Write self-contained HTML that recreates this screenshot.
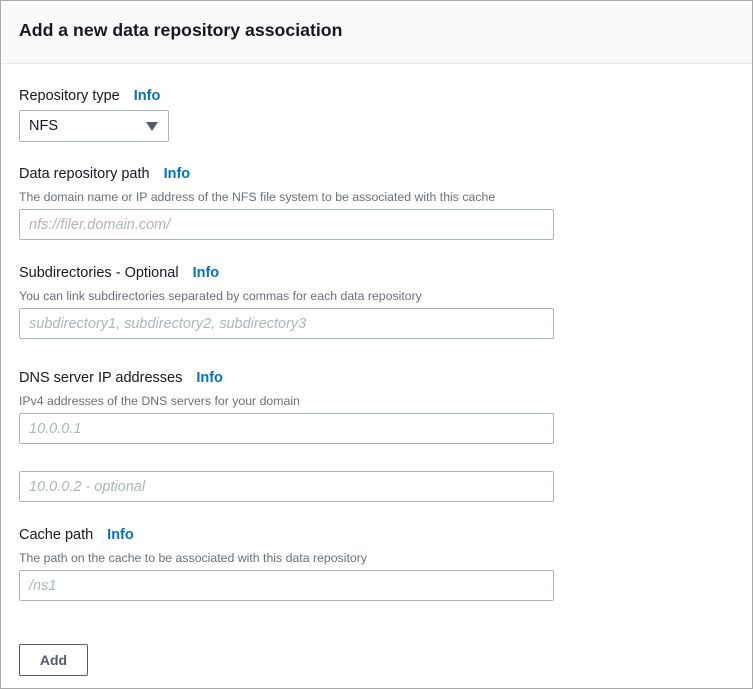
<!DOCTYPE html>
<html><head><style>
body{margin:0;width:753px;height:689px;background:#fff;font-family:"Liberation Sans",sans-serif;position:relative;overflow:hidden}
.box{position:absolute;left:0;top:0;width:751px;height:687px;border:1px solid #a9a9a9}
.hdr{position:absolute;left:1px;top:1px;width:751px;height:62px;background:#fafafa;border-bottom:1px solid #eaeded}
.t{position:absolute;white-space:nowrap}
h1{position:absolute;left:19px;top:20px;margin:0;font-size:17.7px;font-weight:bold;color:#16191f}
.lab{font-size:14.5px;color:#16191f;margin-top:1px}
.lab b{color:#0073bb;margin-left:14px}
.d{font-size:12.3px;color:#687078}
.in{position:absolute;left:19px;border:1px solid #aab7b8;border-radius:2px;font-size:14.5px;font-style:italic;color:#aab7b8;line-height:29px;padding:1px 0 0 9px;box-sizing:border-box;width:535px;height:31px}
</style></head><body>
<div class="box"></div>
<div class="hdr"></div>
<h1>Add a new data repository association</h1>
<div class="t lab" style="left:19px;top:87px">Repository type<b>Info</b></div>
<div style="position:absolute;left:19px;top:110px;width:150px;height:32px;border:1px solid #aab7b8;border-radius:2px;box-sizing:border-box"></div>
<div class="t" style="left:29px;top:118px;font-size:14.5px;color:#16191f">NFS</div>
<svg style="position:absolute;left:146px;top:122px" width="12" height="9"><path d="M0 0H12L6 9Z" fill="#545b64"/></svg>
<div class="t lab" style="left:19px;top:165px">Data repository path<b>Info</b></div>
<div class="t d" style="left:19px;top:190px">The domain name or IP address of the NFS file system to be associated with this cache</div>
<div class="in" style="top:209px">nfs://filer.domain.com/</div>
<div class="t lab" style="left:19px;top:264px">Subdirectories - Optional<b>Info</b></div>
<div class="t d" style="left:19px;top:289px">You can link subdirectories separated by commas for each data repository</div>
<div class="in" style="top:308px">subdirectory1, subdirectory2, subdirectory3</div>
<div class="t lab" style="left:19px;top:369px">DNS server IP addresses<b>Info</b></div>
<div class="t d" style="left:19px;top:394px">IPv4 addresses of the DNS servers for your domain</div>
<div class="in" style="top:413px">10.0.0.1</div>
<div class="in" style="top:471px">10.0.0.2 - optional</div>
<div class="t lab" style="left:19px;top:526px">Cache path<b>Info</b></div>
<div class="t d" style="left:19px;top:551px">The path on the cache to be associated with this data repository</div>
<div class="in" style="top:570px">/ns1</div>
<div style="position:absolute;left:19px;top:644px;width:69px;height:32px;border:1px solid #545b64;border-radius:2px;box-sizing:border-box;text-align:center;line-height:30px;font-size:14px;font-weight:bold;color:#545b64">Add</div>
</body></html>
